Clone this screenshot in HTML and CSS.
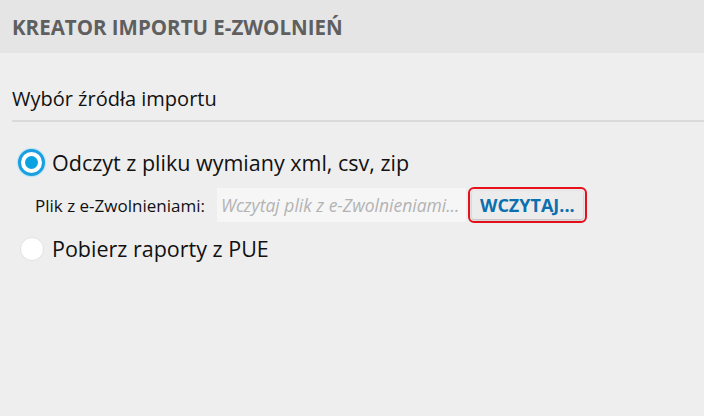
FILE: index.html
```html
<!DOCTYPE html>
<html lang="pl">
<head>
  <meta charset="UTF-8">
  <title>Kreator importu e-Zwolnień</title>
  <link rel="stylesheet" href="styles.css">
</head>
<body>
  <div class="header">
    <h1>KREATOR IMPORTU E-ZWOLNIEŃ</h1>
  </div>

  <div class="content">
    <div class="section-title">Wybór źródła importu</div>

    <div class="options">
      <label class="option">
        <span class="radio-box"><span class="radio checked"></span></span>
        <span class="option-label">Odczyt z pliku wymiany xml, csv, zip</span>
      </label>

      <div class="file-row">
        <span class="file-label">Plik z e-Zwolnieniami:</span>
        <span class="file-input">Wczytaj plik z e-Zwolnieniami...</span>
        <span class="btn-frame"><button class="btn-load">WCZYTAJ...</button></span>
      </div>

      <label class="option">
        <span class="radio-box"><span class="radio"></span></span>
        <span class="option-label">Pobierz raporty z PUE</span>
      </label>
    </div>
  </div>
</body>
</html>
```

FILE: styles.css
```css
body {
  margin: 0;
  font-family: "Open Sans", "Noto Sans", sans-serif;
  background: #eeeeee;
  color: #111;
}
.header {
  background: #e5e5e5;
  height: 53px;
  display: flex;
  align-items: center;
  padding-left: 12px;
}
.header h1 {
  margin: 0;
  font-size: 20.5px;
  font-weight: 700;
  color: #5f5f5f;
}
.content {
  padding: 0 0 0 12px;
}
.section-title {
  margin-top: 32px;
  font-size: 20px;
  line-height: 27px;
  padding-bottom: 8px;
  border-bottom: 2px solid #dadada;
}
.options {
  padding: 26px 0 0 6px;
}
.option {
  display: flex;
  align-items: center;
  gap: 7px;
  height: 29px;
}
.radio-box {
  width: 27px;
  height: 27px;
  display: flex;
  align-items: center;
  justify-content: center;
  flex: none;
}
.radio {
  width: 24px;
  height: 24px;
  border-radius: 50%;
  background: #fff;
  border: 1px solid #e2e2e2;
  box-sizing: border-box;
}
.radio.checked {
  width: 27px;
  height: 27px;
  border: 3px solid #1aa0e0;
  box-shadow: 0 0 1px 1px #b8e2f5;
  display: flex;
  align-items: center;
  justify-content: center;
}
.radio.checked::after {
  content: "";
  width: 13px;
  height: 13px;
  border-radius: 50%;
  background: #0ba2e2;
}
.option-label {
  font-size: 21.5px;
}
.file-row {
  display: flex;
  align-items: center;
  padding: 10px 0 11px 17px;
}
.file-label {
  font-size: 17px;
  width: 182px;
}
.file-input {
  background: #f6f6f6;
  width: 245px;
  height: 34px;
  line-height: 34px;
  padding-left: 4px;
  font-size: 17.5px;
  font-style: italic;
  color: #b3b3b3;
  white-space: nowrap;
  overflow: hidden;
}
.btn-frame {
  margin-left: 2px;
  border: 2px solid #e8101a;
  border-radius: 6px;
  padding: 2px;
}
.btn-load {
  display: block;
  height: 28px;
  border: none;
  background: #ececec;
  box-shadow: 0 1px 3px rgba(0, 0, 0, 0.25);
  font-family: inherit;
  font-size: 18px;
  font-weight: 700;
  color: #0c6fae;
  padding: 0 8px;
  border-radius: 2px;
}
```
